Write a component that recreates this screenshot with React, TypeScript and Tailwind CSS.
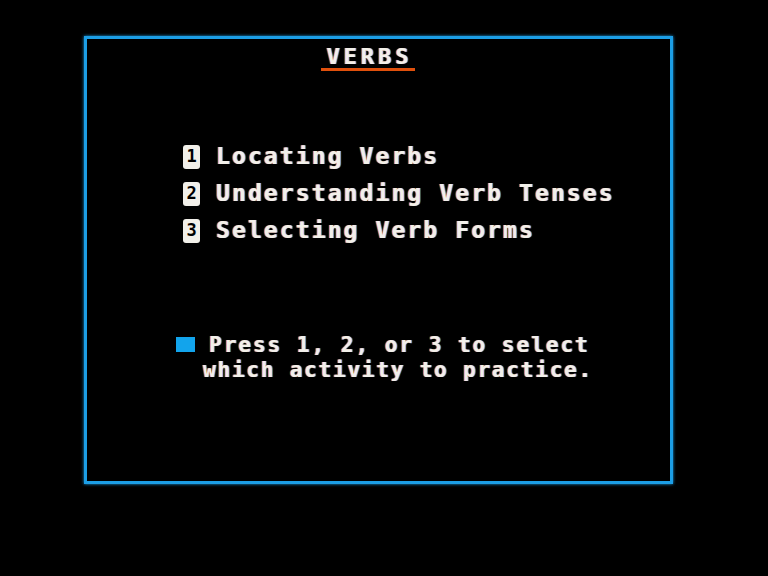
const items = ['Locating Verbs', 'Understanding Verb Tenses', 'Selecting Verb Forms']

const glow = '[text-shadow:-1px_0_#d0641e,1px_0_#3d8fe0]'

export default function App() {
  return (
    <div className="h-[576px] w-[768px] bg-black pl-[84px] pt-[36px] font-['DejaVu_Sans_Mono',monospace] font-bold text-[#f2f0ea]">
      <div className="h-[448px] w-[589px] border-[3px] border-[#1c9ee6] shadow-[0_0_3px_#1c9ee6]">
        {/* Title */}
        <div className="flex justify-center pr-[18px] pt-[6px]">
          <div className={`text-[22px] leading-[23px] tracking-[4px] ${glow}`}>VERBS</div>
        </div>
        <div className="flex justify-center pr-[22px]">
          <div className="h-[3px] w-[94px] bg-[#e0500c]" />
        </div>

        {/* Menu */}
        <div className="ml-[96px] mt-[67px] flex flex-col">
          {items.map((label, i) => (
            <div key={label} className="flex h-[37px] items-center">
              <div className="flex h-[24px] w-[17px] items-center justify-center rounded-[3px] bg-[#f2f0ea] text-[17px] leading-none text-black">
                {i + 1}
              </div>
              <div className={`ml-[16px] text-[23px] leading-none tracking-[2.1px] ${glow}`}>{label}</div>
            </div>
          ))}
        </div>

        {/* Prompt */}
        <div className="ml-[89px] mt-[84px] flex">
          <div className="mt-[4px] h-[15px] w-[19px] bg-[#12a4ec]" />
          <div className={`ml-[14px] text-[21px] leading-[25px] tracking-[2px] ${glow}`}>
            <div>Press 1, 2, or 3 to select</div>
            <div className="-ml-[6px] tracking-[1.8px]">which activity to practice.</div>
          </div>
        </div>
      </div>
    </div>
  )
}
